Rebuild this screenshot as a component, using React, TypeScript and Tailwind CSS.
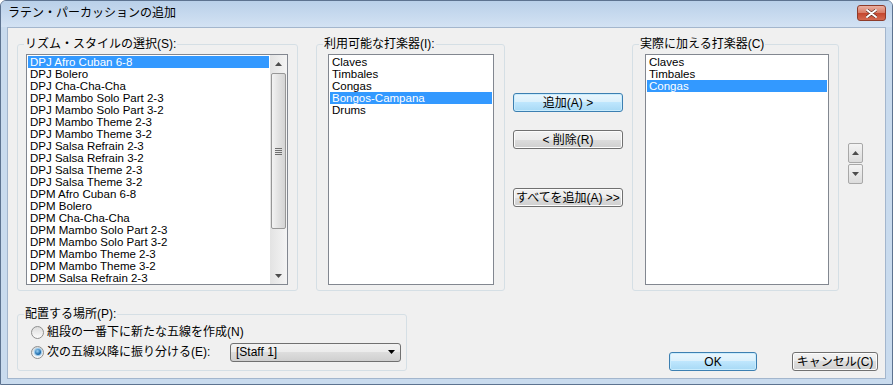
import React from "react";

const rhythms = [
  "DPJ Afro Cuban 6-8",
  "DPJ Bolero",
  "DPJ Cha-Cha-Cha",
  "DPJ Mambo Solo Part 2-3",
  "DPJ Mambo Solo Part 3-2",
  "DPJ Mambo Theme 2-3",
  "DPJ Mambo Theme 3-2",
  "DPJ Salsa Refrain 2-3",
  "DPJ Salsa Refrain 3-2",
  "DPJ Salsa Theme 2-3",
  "DPJ Salsa Theme 3-2",
  "DPM Afro Cuban 6-8",
  "DPM Bolero",
  "DPM Cha-Cha-Cha",
  "DPM Mambo Solo Part 2-3",
  "DPM Mambo Solo Part 3-2",
  "DPM Mambo Theme 2-3",
  "DPM Mambo Theme 3-2",
  "DPM Salsa Refrain 2-3",
];

const available = ["Claves", "Timbales", "Congas", "Bongos-Campana", "Drums"];
const added = ["Claves", "Timbales", "Congas"];

function Item({ label, selected }: { label: string; selected?: boolean }) {
  return (
    <div
      className={
        "h-[12px] leading-[12px] pl-[2px] text-[11.5px] whitespace-nowrap " +
        (selected ? "bg-[#3399ff] text-white" : "text-black")
      }
    >
      {label}
    </div>
  );
}

function Group({
  label,
  className,
  children,
}: {
  label: string;
  className: string;
  children: React.ReactNode;
}) {
  return (
    <fieldset className={"border border-[#d5dfe5] rounded-[3px] " + className}>
      <legend className="ml-[6px] px-[1px] text-[12px] leading-[14px] text-black">{label}</legend>
      {children}
    </fieldset>
  );
}

function Button({
  label,
  primary,
  className,
}: {
  label: string;
  primary?: boolean;
  className: string;
}) {
  return (
    <div
      className={
        "h-[19px] flex items-center justify-center rounded-[3px] border text-[12px] leading-none text-black " +
        (primary
          ? "border-[#3c7fb1] bg-[linear-gradient(#eaf6fd_0%,#d9f0fc_50%,#bee6fd_50%,#a7d9f5_100%)] shadow-[inset_0_0_0_1px_#c9ecfd] "
          : "border-[#707070] bg-[linear-gradient(#f2f2f2_0%,#ebebeb_50%,#dddddd_50%,#cfcfcf_100%)] shadow-[inset_0_0_0_1px_#fcfcfc] ") +
        className
      }
    >
      {label}
    </div>
  );
}

function Arrow({ up }: { up?: boolean }) {
  return (
    <svg width="7" height="4" viewBox="0 0 7 4">
      <path d={up ? "M0 4 L3.5 0 L7 4 Z" : "M0 0 L7 0 L3.5 4 Z"} fill="#4d4d4d" />
    </svg>
  );
}

function Radio({ checked }: { checked?: boolean }) {
  return (
    <div className="w-[13px] h-[13px] rounded-full border border-[#8e8f8f] bg-[linear-gradient(#dcdcdc,#fbfbfb)] flex items-center justify-center">
      {checked && (
        <div className="w-[6px] h-[6px] rounded-full bg-[radial-gradient(circle_at_40%_35%,#9bd0f4,#1f6fb0_60%,#0f3f70)] shadow-[0_0_1px_1px_#8fc6ee]" />
      )}
    </div>
  );
}

export default function App() {
  return (
    <div className="w-[893px] h-[385px] flex flex-col bg-[#c9dbee] border border-[#5d7390] rounded-t-[6px] overflow-hidden font-['Liberation_Sans','Noto_Sans_CJK_JP',sans-serif]">
      {/* title bar */}
      <div className="h-[26px] flex items-start justify-between pl-[7px] pr-[6px] bg-[linear-gradient(#b9d0e9,#d3e2f3)]">
        <span className="mt-[5px] text-[12px] leading-[14px] text-black">ラテン・パーカッションの追加</span>
        <div className="mt-[4px] w-[29px] h-[16px] rounded-[3px] border border-[#8e3b2a] bg-[linear-gradient(#eab0a2_0%,#d87a63_50%,#c4452c_50%,#d46a50_100%)] flex items-center justify-center">
          <svg width="11" height="9" viewBox="0 0 11 9">
            <path
              d="M1 1 L10 8 M10 1 L1 8"
              stroke="#5b2a20"
              strokeWidth="3.2"
              strokeLinecap="round"
            />
            <path d="M1 1 L10 8 M10 1 L1 8" stroke="#ffffff" strokeWidth="2" strokeLinecap="round" />
          </svg>
        </div>
      </div>

      {/* client area */}
      <div className="mx-[6px] mb-[5px] flex-1 bg-[#f0f0f0] border border-[#a3b6cd] flex flex-col pl-[9px] pt-[9px]">
        <div className="flex items-start">
          <Group label="リズム・スタイルの選択(S):" className="w-[281px] h-[254px]">
            <div className="ml-[8px] mt-[3px] w-[262px] h-[231px] border border-[#828790] bg-white flex">
              <div className="flex-1 p-[1px] overflow-hidden">
                {rhythms.map((r, i) => (
                  <Item key={r} label={r} selected={i === 0} />
                ))}
              </div>
              <div className="w-[17px] flex flex-col bg-[linear-gradient(90deg,#e3e3e3,#f4f4f4)]">
                <div className="h-[17px] flex items-center justify-center">
                  <Arrow up />
                </div>
                <div className="flex-1 px-[1px]">
                  <div className="mt-[1px] h-[156px] rounded-[2px] border border-[#979797] bg-[linear-gradient(90deg,#f3f3f3,#e2e2e2_50%,#d4d4d4)] flex flex-col items-center justify-center gap-[1px]">
                    <div className="w-[7px] h-[1px] bg-[#6f6f6f]" />
                    <div className="w-[7px] h-[1px] bg-[#6f6f6f]" />
                    <div className="w-[7px] h-[1px] bg-[#6f6f6f]" />
                    <div className="w-[7px] h-[1px] bg-[#6f6f6f]" />
                  </div>
                </div>
                <div className="h-[17px] flex items-center justify-center">
                  <Arrow />
                </div>
              </div>
            </div>
          </Group>

          <Group label="利用可能な打楽器(I):" className="ml-[18px] w-[189px] h-[254px]">
            <div className="ml-[11px] mt-[3px] w-[166px] h-[231px] border border-[#828790] bg-white p-[1px] overflow-hidden">
              {available.map((r, i) => (
                <Item key={r} label={r} selected={i === 3} />
              ))}
            </div>
          </Group>

          <div className="ml-[8px] w-[110px] flex flex-col">
            <Button label="追加(A) >" primary className="mt-[56px]" />
            <Button label="< 削除(R)" className="mt-[18px]" />
            <Button label="すべてを追加(A) >>" className="mt-[39px]" />
          </div>

          <Group label="実際に加える打楽器(C)" className="ml-[9px] w-[207px] h-[254px]">
            <div className="ml-[12px] mt-[3px] w-[184px] h-[231px] border border-[#828790] bg-white p-[1px] overflow-hidden">
              {added.map((r, i) => (
                <Item key={r} label={r} selected={i === 2} />
              ))}
            </div>
          </Group>

          <div className="ml-[9px] mt-[106px] w-[15px] flex flex-col gap-[1px]">
            <div className="h-[20px] rounded-[2px] border border-[#a8a8a8] bg-[linear-gradient(#f4f4f4,#dcdcdc)] flex items-center justify-center">
              <Arrow up />
            </div>
            <div className="h-[20px] rounded-[2px] border border-[#a8a8a8] bg-[linear-gradient(#f4f4f4,#dcdcdc)] flex items-center justify-center">
              <Arrow />
            </div>
          </div>
        </div>

        <div className="mt-[16px] flex items-end pr-[7px]">
          <Group label="配置する場所(P):" className="w-[390px] h-[64px]">
            <div className="mt-[3px] h-[16px] pl-[13px] flex items-center">
              <Radio />
              <span className="ml-[3px] text-[12px] leading-none text-black">組段の一番下に新たな五線を作成(N)</span>
            </div>
            <div className="mt-[2px] h-[20px] pl-[13px] flex items-center">
              <Radio checked />
              <span className="ml-[3px] w-[183px] text-[12px] leading-none text-black">次の五線以降に振り分ける(E):</span>
              <div className="w-[171px] h-[19px] rounded-[3px] border border-[#707070] bg-[linear-gradient(#f2f2f2_0%,#ebebeb_50%,#dddddd_50%,#cfcfcf_100%)] flex items-center justify-between pl-[5px] pr-[5px]">
                <span className="text-[12px] leading-none text-black">[Staff 1]</span>
                <svg width="7" height="4" viewBox="0 0 7 4">
                  <path d="M0 0 L7 0 L3.5 4 Z" fill="#000" />
                </svg>
              </div>
            </div>
          </Group>

          <Button label="OK" primary className="ml-auto w-[88px]" />
          <Button label="キャンセル(C)" className="ml-[35px] w-[86px]" />
        </div>
      </div>
    </div>
  );
}
